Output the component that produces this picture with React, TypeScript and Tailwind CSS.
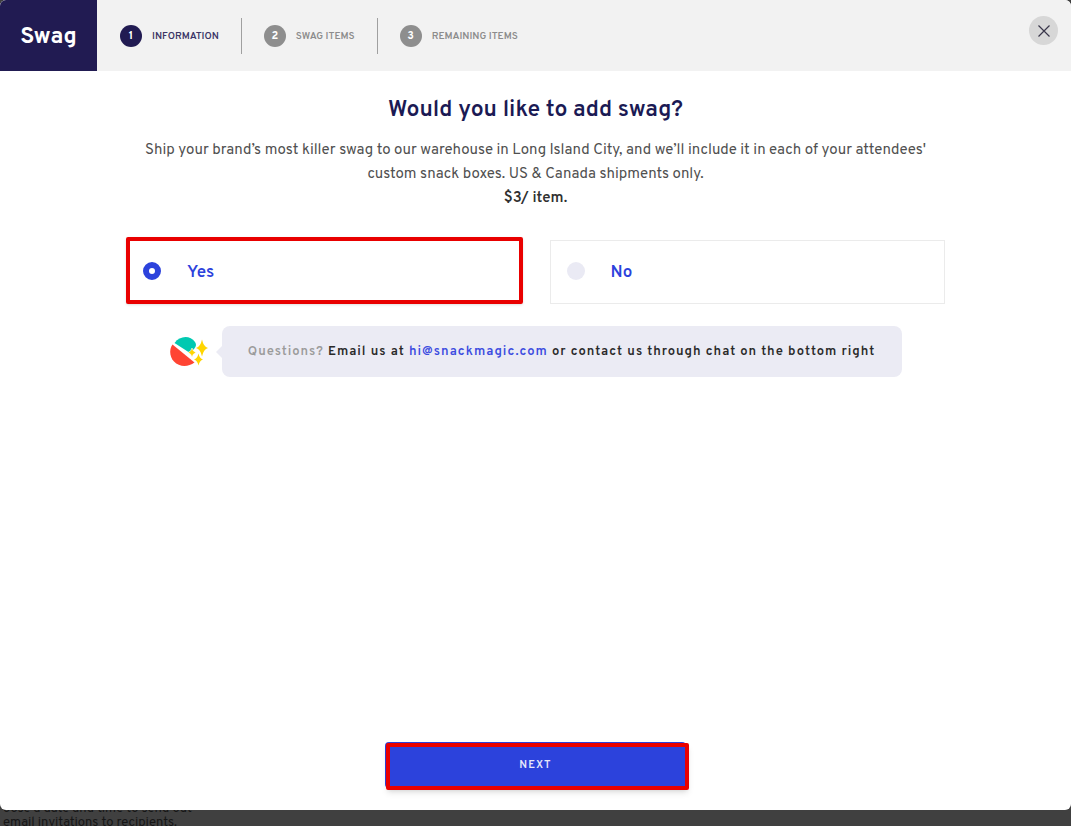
import { useState } from "react";

const steps = ["Information", "Swag Items", "Remaining Items"];

function SnackLogo() {
  return (
    <svg className="w-[38px] h-[30px] shrink-0" viewBox="0 0 38 30" aria-hidden="true">
      <path d="M4.500 6 C10 -1.500 20 -2 25 5 C27 8 25.500 10 24 12 L20 16 Z" fill="#00c9b1" />
      <path d="M2.500 7.500 L24.500 25.500 C18 30.500 9 30 4 24.500 C-0.500 19.500 -1 12.500 2.500 7.500 Z" fill="#ff4433" />
      <path d="M32 2.500 Q33.500 9.800 38 11 Q33.500 12.200 32 19.500 Q30.500 12.200 26 11 Q30.500 9.800 32 2.500 Z" fill="#ffd500" />
      <path d="M22 11 Q22.800 14.500 26 15.500 Q22.800 16.500 22 20 Q21.200 16.500 18 15.500 Q21.200 14.500 22 11 Z" fill="#ffd500" stroke="#fff" strokeWidth="0.600" />
      <path d="M28.500 16.500 Q29.600 21.500 33 22.500 Q29.600 23.500 28.500 28.500 Q27.400 23.500 24 22.500 Q27.400 21.500 28.500 16.500 Z" fill="#ffd500" />
    </svg>
  );
}

function Header() {
  return (
    <header className="flex h-[71px] bg-[#f2f2f2]">
      <div className="flex w-[97px] shrink-0 items-center justify-center bg-[#211b52] pt-1.5 text-[23px] font-bold text-white">
        Swag
      </div>
      <ol className="flex grow items-center">
        {steps.map((step, idx) => (
          <li
            key={step}
            className={`flex h-9 items-center gap-2.5 px-[22px] text-[10px] font-semibold uppercase first:pl-[23px] ${
              idx !== steps.length - 1 ? "border-r border-[#a0a0a0]" : ""
            } ${idx === 0 ? "text-[#3b3667]" : "text-[#8c8c8c]"}`}
          >
            <span
              className={`flex size-[22px] items-center justify-center rounded-full pt-0.5 text-[11px] font-bold text-white ${
                idx === 0 ? "bg-[#211b52]" : "bg-[#8e8e8e]"
              }`}
            >
              {idx + 1}
            </span>
            <span className="pt-px">{step}</span>
          </li>
        ))}
      </ol>
      <button
        type="button"
        aria-label="Close"
        className="mt-4 mr-[13px] flex size-[29px] items-center justify-center rounded-full bg-[#d7d7d7]"
      >
        <svg className="size-3" viewBox="0 0 12 12" fill="none" stroke="#39364a" strokeWidth="1.200">
          <path d="M0.500 0.500 L11.500 11.500 M11.500 0.500 L0.500 11.500" />
        </svg>
      </button>
    </header>
  );
}

export default function App() {
  const [answer, setAnswer] = useState("Yes");

  return (
    <div className="flex min-h-screen flex-col bg-[#404040] font-['Overpass','Roboto',sans-serif]">
      <div className="flex grow flex-col overflow-hidden rounded-md bg-white">
        <Header />

        <main className="flex grow flex-col items-center px-6 pt-6 pb-[22px]">
          <h1 className="text-[23px] leading-8 font-semibold text-[#1b1a54]">Would you like to add swag?</h1>
          <p className="mt-3 max-w-[800px] text-center text-[15px] leading-6 text-[#505050]">
            Ship your brand’s most killer swag to our warehouse in Long Island City, and we’ll include it in each of
            your attendees' custom snack boxes. US &amp; Canada shipments only.
            <strong className="block font-semibold text-[#303030]">$3/ item.</strong>
          </p>

          <fieldset className="mt-[29px] grid w-full max-w-[819px] grid-cols-2 gap-7">
            {["Yes", "No"].map((option) => (
              <label
                key={option}
                className="relative flex h-16 items-center gap-[26px] border border-[#ebebeb] pb-0.5 pl-4 text-[17px] font-semibold text-[#2c42dc]"
              >
                <input
                  type="radio"
                  name="swag"
                  value={option}
                  checked={answer === option}
                  onChange={() => setAnswer(option)}
                  className="size-[18px] appearance-none rounded-full bg-[#eaeaf4] checked:border-[6px] checked:border-[#2c42dc] checked:bg-white"
                />
                <span className="pt-1.5">{option}</span>
                {answer === option && (
                  <span className="pointer-events-none absolute -top-1 -right-0.5 -bottom-px -left-px rounded-xs border-4 border-[#e90000] shadow-sm" />
                )}
              </label>
            ))}
          </fieldset>

          <div className="mt-[22px] flex w-full max-w-[732px] items-center">
            <SnackLogo />
            <svg className="ml-2 h-3 w-1.5 shrink-0" viewBox="0 0 6 12" aria-hidden="true">
              <path d="M6 0 L0 6 L6 12 Z" fill="#ebebf4" />
            </svg>
            <p className="flex min-h-[51px] grow items-center justify-center rounded-lg bg-[#ebebf4] pt-0.5 text-[13px] font-semibold tracking-[1px] text-[#292929]">
              <span>
                <span className="text-[#9b9b9b]">Questions?</span> Email us at{" "}
                <a href="mailto:hi@snackmagic.com" className="text-[#3c4ce0]">
                  hi@snackmagic.com
                </a>{" "}
                or contact us through chat on the bottom right
              </span>
            </p>
          </div>

          <button
            type="button"
            className="relative mt-auto h-[46px] w-full max-w-[301px] rounded-sm bg-[#2c42dc] text-[11px] font-semibold tracking-[1px] text-[#e6e8fb]"
          >
            NEXT
            <span className="pointer-events-none absolute top-px -right-[3px] -bottom-0.5 left-px rounded-xs border-4 border-[#e90000] shadow-md" />
          </button>
        </main>
      </div>

      <div className="h-4 overflow-hidden pl-[3px] text-[13px] leading-[14px] text-[#161616]">
        <p className="-mt-2">oose a date and time to send out</p>
        <p>email invitations to recipients.</p>
      </div>
    </div>
  );
}
